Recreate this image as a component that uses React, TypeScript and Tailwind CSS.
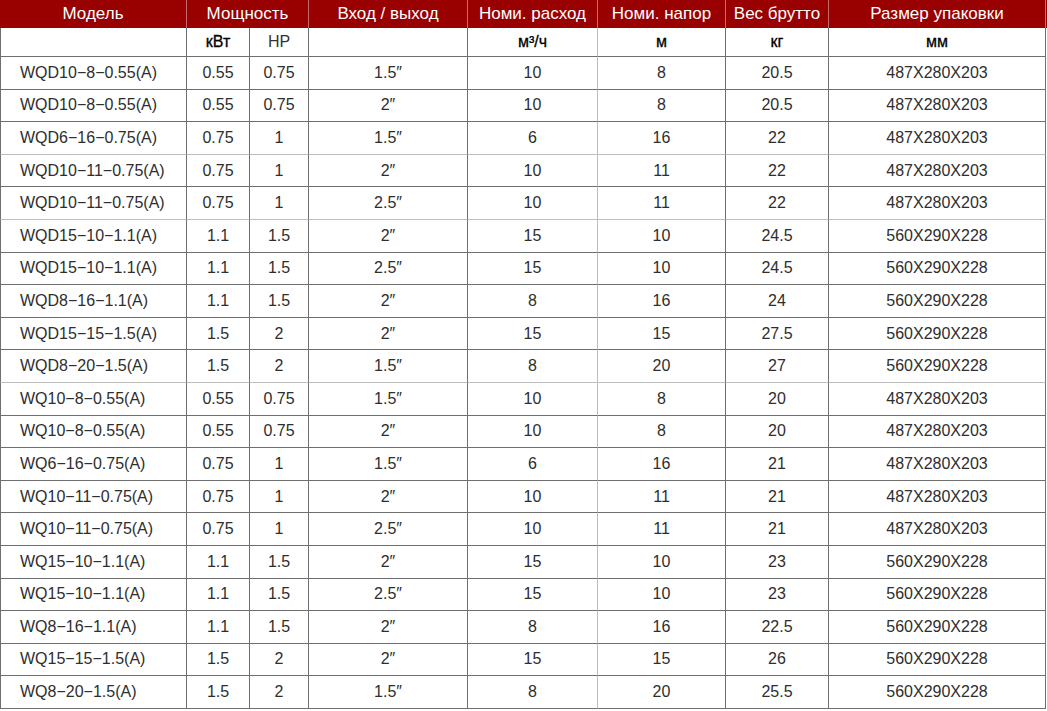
const rows: string[][] = [
  ["WQD10−8−0.55(A)", "0.55", "0.75", "1.5″", "10", "8", "20.5", "487X280X203"],
  ["WQD10−8−0.55(A)", "0.55", "0.75", "2″", "10", "8", "20.5", "487X280X203"],
  ["WQD6−16−0.75(A)", "0.75", "1", "1.5″", "6", "16", "22", "487X280X203"],
  ["WQD10−11−0.75(A)", "0.75", "1", "2″", "10", "11", "22", "487X280X203"],
  ["WQD10−11−0.75(A)", "0.75", "1", "2.5″", "10", "11", "22", "487X280X203"],
  ["WQD15−10−1.1(A)", "1.1", "1.5", "2″", "15", "10", "24.5", "560X290X228"],
  ["WQD15−10−1.1(A)", "1.1", "1.5", "2.5″", "15", "10", "24.5", "560X290X228"],
  ["WQD8−16−1.1(A)", "1.1", "1.5", "2″", "8", "16", "24", "560X290X228"],
  ["WQD15−15−1.5(A)", "1.5", "2", "2″", "15", "15", "27.5", "560X290X228"],
  ["WQD8−20−1.5(A)", "1.5", "2", "1.5″", "8", "20", "27", "560X290X228"],
  ["WQ10−8−0.55(A)", "0.55", "0.75", "1.5″", "10", "8", "20", "487X280X203"],
  ["WQ10−8−0.55(A)", "0.55", "0.75", "2″", "10", "8", "20", "487X280X203"],
  ["WQ6−16−0.75(A)", "0.75", "1", "1.5″", "6", "16", "21", "487X280X203"],
  ["WQ10−11−0.75(A)", "0.75", "1", "2″", "10", "11", "21", "487X280X203"],
  ["WQ10−11−0.75(A)", "0.75", "1", "2.5″", "10", "11", "21", "487X280X203"],
  ["WQ15−10−1.1(A)", "1.1", "1.5", "2″", "15", "10", "23", "560X290X228"],
  ["WQ15−10−1.1(A)", "1.1", "1.5", "2.5″", "15", "10", "23", "560X290X228"],
  ["WQ8−16−1.1(A)", "1.1", "1.5", "2″", "8", "16", "22.5", "560X290X228"],
  ["WQ15−15−1.5(A)", "1.5", "2", "2″", "15", "15", "26", "560X290X228"],
  ["WQ8−20−1.5(A)", "1.5", "2", "1.5″", "8", "20", "25.5", "560X290X228"],
];

// widths include the right border (first one also the left border)
const cols = [
  "w-[187px] border-l justify-start pl-[19px]",
  "w-[63px]",
  "w-[59px]",
  "w-[159px]",
  "w-[130px] !border-r-[#bdbdbd]",
  "w-[128px]",
  "w-[103px]",
  "w-[217px]",
];

const lightRows = [2, 4, 9];

const heads = [
  { label: "Модель", w: "w-[187px]" },
  { label: "Мощность", w: "w-[122px]" },
  { label: "Вход / выход", w: "w-[159px]" },
  { label: "Номи. расход", w: "w-[130px]" },
  { label: "Номи. напор", w: "w-[128px]" },
  { label: "Вес брутто", w: "w-[103px]" },
  { label: "Размер упаковки", w: "w-[217px]" },
];

const units = ["", "кВт", "HP", "", "м³/ч", "м", "кг", "мм"];

export default function App() {
  return (
    <div className="w-[1047px] h-[711px] overflow-hidden bg-white font-['Liberation_Sans',Arial,sans-serif]">
      {/* header */}
      <div className="flex h-[28px] w-[1047px] bg-[#990000] text-white text-[17px]">
        {heads.map((h) => (
          <div
            key={h.label}
            className={`${h.w} flex items-center justify-center border-r border-[#c46a6a] whitespace-nowrap`}
          >
            {h.label}
          </div>
        ))}
      </div>

      {/* units */}
      <div className="flex h-[29px] text-[16px]">
        {units.map((u, i) => (
          <div
            key={i}
            className={`${cols[i]} flex items-center justify-center border-r border-b border-[#6f6f6f] ${
              u === "HP" ? "text-[#333]" : "text-black [-webkit-text-stroke:0.3px_#000]"
            }`}
          >
            {i === 0 ? "" : u}
          </div>
        ))}
      </div>

      {rows.map((r, ri) => (
        <div key={ri} className="flex h-[32.6px] text-[16px] text-[#2e2e2e]">
          {r.map((c, ci) => (
            <div
              key={ci}
              className={`${cols[ci]} flex items-center justify-center border-r border-b border-[#6f6f6f] whitespace-nowrap ${
                lightRows.includes(ri) ? "!border-b-[#bdbdbd]" : ""
              }`}
            >
              {c}
            </div>
          ))}
        </div>
      ))}
    </div>
  );
}
